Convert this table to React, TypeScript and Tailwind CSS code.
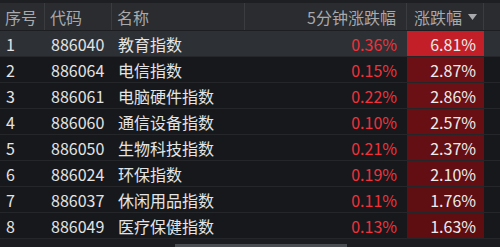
import { FC } from "react";

type Row = {
  no: number;
  code: string;
  name: string;
  five: string;
  chg: string;
  cell: string;
};

const rows: Row[] = [
  { no: 1, code: "886040", name: "教育指数", five: "0.36%", chg: "6.81%", cell: "bg-[#c21f28]" },
  { no: 2, code: "886064", name: "电信指数", five: "0.15%", chg: "2.87%", cell: "bg-[#6c1015]" },
  { no: 3, code: "886061", name: "电脑硬件指数", five: "0.22%", chg: "2.86%", cell: "bg-[#6b1015]" },
  { no: 4, code: "886060", name: "通信设备指数", five: "0.10%", chg: "2.57%", cell: "bg-[#670f13]" },
  { no: 5, code: "886050", name: "生物科技指数", five: "0.21%", chg: "2.37%", cell: "bg-[#640f13]" },
  { no: 6, code: "886024", name: "环保指数", five: "0.19%", chg: "2.10%", cell: "bg-[#620e12]" },
  { no: 7, code: "886037", name: "休闲用品指数", five: "0.11%", chg: "1.76%", cell: "bg-[#5f0e12]" },
  { no: 8, code: "886049", name: "医疗保健指数", five: "0.13%", chg: "1.63%", cell: "bg-[#5e0e11]" },
];

const grid = "grid grid-cols-[45px_67px_133px_162px_77px_16px]";

const RankRow: FC<{ row: Row; active: boolean }> = ({ row, active }) => (
  <div
    className={`${grid} h-[26px] items-stretch border-b border-[#24262a] ${
      active ? "bg-[#2d3034]" : "bg-[#16181c]"
    }`}>
    <div className="flex items-center pl-[6px] text-[#e4e4e4]">{row.no}</div>
    <div className="flex items-center pl-[6px] text-[#e4e4e4]">{row.code}</div>
    <div className="flex items-center pl-[6px] text-[#e4e4e4]">{row.name}</div>
    <div className="flex items-center justify-end pr-[10px] text-[#f2313a]">
      {row.five}
    </div>
    <div
      className={`flex items-center justify-end pr-[8px] text-[#ececec] ${row.cell}`}>
      {row.chg}
    </div>
    <div />
  </div>
);

export default function App() {
  return (
    <div
      className="w-[500px] h-[247px] overflow-hidden bg-[#16181c] text-[16px] leading-none flex flex-col"
      style={{ fontFamily: '"Noto Sans CJK SC", "Noto Sans", sans-serif' }}>
      <div className="h-[3px] bg-[#1d1f22]" />
      <div
        className={`${grid} h-[28px] bg-[#2a2c30] text-[#a7a9ac] border-b border-[#1c1e21]`}>
        <div className="flex items-center pl-[5px] border-r border-[#3a3c40]">序号</div>
        <div className="flex items-center pl-[5px] border-r border-[#3a3c40]">代码</div>
        <div className="flex items-center pl-[5px] border-r border-[#3a3c40]">名称</div>
        <div className="flex items-center justify-end pr-[10px] border-r border-[#3a3c40]">
          5分钟涨跌幅
        </div>
        <div className="flex items-center justify-end pr-[6px] gap-[6px] border-r border-[#3a3c40]">
          <span>涨跌幅</span>
          <svg width="9" height="6" viewBox="0 0 9 6">
            <path d="M0 0h9L4.5 6z" fill="#a7a9ac" />
          </svg>
        </div>
        <div />
      </div>
      {rows.map((r, i) => (
        <RankRow key={r.no} row={r} active={i === 0} />
      ))}
      <div className="flex-1 bg-[#1b1d21] flex items-end">
        <div className="ml-[175px] w-[172px] h-[3px] bg-[#4a4d52]" />
      </div>
    </div>
  );
}
